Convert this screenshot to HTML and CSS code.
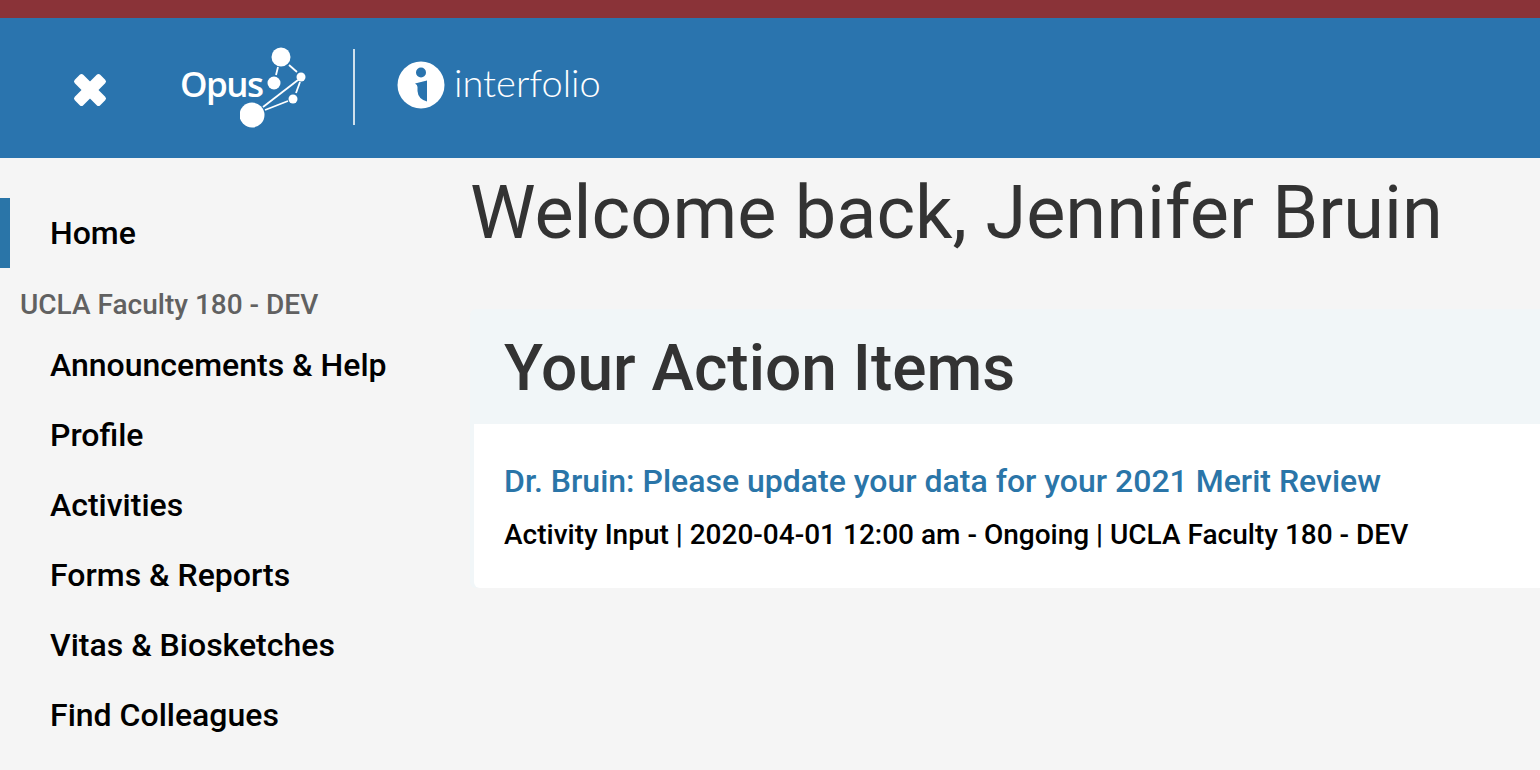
FILE: index.html
```html
<!DOCTYPE html>
<html lang="en">
<head>
  <meta charset="UTF-8" />
  <title>Opus - Home</title>
  <link rel="stylesheet" href="styles.css">
</head>
<body>
  <div class="top-strip"></div>
  <header class="site-header">
    <button class="close-btn" aria-label="Close menu">
      <svg width="34" height="34" viewBox="0 0 34 34">
        <rect x="-1" y="11" width="36" height="12" rx="2.500" fill="#fff" transform="rotate(45 17 17)"/>
        <rect x="-1" y="11" width="36" height="12" rx="2.500" fill="#fff" transform="rotate(-45 17 17)"/>
      </svg>
    </button>
    <div class="opus-logo">
      <span class="opus-word">Opus</span>
      <svg class="opus-nodes" width="70" height="86" viewBox="0 0 70 86">
        <g stroke="#fff" stroke-width="1.800" fill="none">
          <path d="M38 22 L36 30"/>
          <path d="M49 20 L57 27"/>
          <path d="M58 35 L23 62"/>
          <path d="M60 37 L56 48"/>
          <path d="M48 56 L25 65"/>
        </g>
        <circle cx="41" cy="12" r="9.500" fill="#fff"/>
        <circle cx="61" cy="32" r="4.500" fill="#fff"/>
        <circle cx="34" cy="38" r="6.500" fill="#fff"/>
        <circle cx="53" cy="54" r="4.500" fill="#fff"/>
        <circle cx="12" cy="70" r="12.500" fill="#fff"/>
      </svg>
    </div>
    <div class="logo-divider"></div>
    <div class="interfolio-logo">
      <svg width="48" height="48" viewBox="0 0 48 48">
        <circle cx="24" cy="24" r="23.500" fill="#fff"/>
        <circle cx="24" cy="11.500" r="5" fill="#2a74ae"/>
        <path d="M18 22.500 L30 19.500 L30 40.500 Q21 38 20.500 30 L20.500 26 Q20.500 23.500 18 22.500 Z" fill="#2a74ae"/>
      </svg>
      <span class="interfolio-word">interfolio</span>
    </div>
  </header>
  <div class="layout">
    <nav class="sidebar">
      <a class="nav-item active">Home</a>
      <div class="nav-group">UCLA Faculty 180 - DEV</div>
      <a class="nav-item">Announcements &amp; Help</a>
      <a class="nav-item">Profile</a>
      <a class="nav-item">Activities</a>
      <a class="nav-item">Forms &amp; Reports</a>
      <a class="nav-item">Vitas &amp; Biosketches</a>
      <a class="nav-item">Find Colleagues</a>
    </nav>
    <main class="content">
      <h1 class="welcome">Welcome back, Jennifer Bruin</h1>
      <section class="panel">
        <h2 class="panel-title">Your Action Items</h2>
        <div class="panel-body">
          <a class="action-link">Dr. Bruin: Please update your data for your 2021 Merit Review</a>
          <p class="action-meta">Activity Input | 2020-04-01 12:00 am - Ongoing | UCLA Faculty 180 - DEV</p>
        </div>
      </section>
    </main>
  </div>
</body>
</html>
```

FILE: styles.css
```css
html, body {
  height: 100%;
}
body {
  margin: 0;
  font-family: Roboto, "Liberation Sans", sans-serif;
  background: #f5f5f5;
  overflow: hidden;
}
.top-strip {
  height: 18px;
  background: #8a3338;
}
.site-header {
  height: 140px;
  background: #2a74ae;
  display: flex;
  align-items: center;
}
.close-btn {
  margin-left: 73px;
  padding: 0;
  border: none;
  background: none;
  display: flex;
  margin-top: 4px;
}
.opus-logo {
  margin-left: 73px;
  width: 127px;
  height: 86px;
  position: relative;
}
.opus-word {
  display: block;
  font-family: "Open Sans", sans-serif;
  font-weight: 600;
  font-size: 35px;
  letter-spacing: -1.500px;
  color: #fff;
  line-height: 78px;
}
.opus-nodes {
  position: absolute;
  left: 60px;
  top: 0;
}
.logo-divider {
  width: 2px;
  height: 76px;
  background: #cfe0ec;
  margin: 0 0 2px 46px;
}
.interfolio-logo {
  display: flex;
  align-items: center;
  gap: 9px;
  margin: 0 0 7px 42px;
}
.interfolio-word {
  font-family: Lato, sans-serif;
  font-weight: 300;
  font-size: 38px;
  color: #fff;
  margin-bottom: 5px;
}
.layout {
  display: flex;
}
.sidebar {
  width: 470px;
  padding-top: 40px;
  flex-shrink: 0;
}
.nav-item {
  display: block;
  height: 70px;
  line-height: 70px;
  padding-left: 50px;
  font-size: 32px;
  font-weight: 500;
  color: #000;
}
.nav-item.active {
  box-sizing: border-box;
  border-left: 10px solid #2a75a8;
  padding-left: 40px;
}
.nav-group {
  padding-left: 20px;
  height: 62px;
  line-height: 73px;
  font-size: 28px;
  font-weight: 500;
  color: #616161;
}
.content {
  flex: 1;
  min-width: 0;
}
.welcome {
  margin: 12px 0 0;
  font-size: 73.900px;
  line-height: 86px;
  font-weight: 400;
  color: #333;
}
.panel {
  margin-top: 53px;
  background: #f1f6f8;
  padding-left: 4px;
  border-radius: 6px 0 0 6px;
}
.panel-title {
  margin: 0;
  height: 115px;
  padding-left: 30px;
  font-size: 64px;
  line-height: 120px;
  font-weight: 500;
  color: #333;
}
.panel-body {
  height: 164px;
  box-sizing: border-box;
  background: #fff;
  padding: 36px 30px 0;
  border-radius: 0 0 0 6px;
}
.action-link {
  display: block;
  font-size: 32px;
  line-height: 42px;
  font-weight: 500;
  color: #2a75a8;
}
.action-meta {
  margin: 14px 0 0;
  font-size: 28px;
  line-height: 38px;
  font-weight: 500;
  color: #000;
}
```
